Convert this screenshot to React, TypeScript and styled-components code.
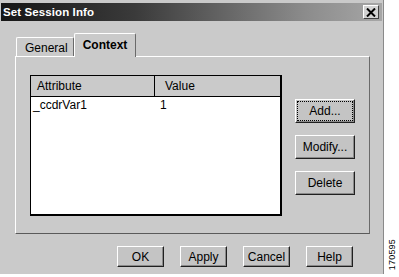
import React from "react"
import styled, { createGlobalStyle } from "styled-components"

const GlobalStyle = createGlobalStyle`
  html, body {
    margin: 0;
    padding: 0;
    background: #ffffff;
  }
  body {
    font-family: "Liberation Sans", Arial, sans-serif;
    font-size: 12px;
    color: #000;
  }
`

const face = "#cacaca"

const rows = [{ attribute: "_ccdrVar1", value: "1" }]

export default function App() {
  return (
    <>
      <GlobalStyle />
      <S.Page>
        <S.Dialog>
          <S.TitleBar>
            <S.Title>Set Session Info</S.Title>
            <S.CloseButton>
              <svg width="10" height="9" viewBox="0 0 10 9">
                <path d="M1 0.5 L9 8.5 M9 0.5 L1 8.5" stroke="#000" strokeWidth="2" />
              </svg>
            </S.CloseButton>
          </S.TitleBar>

          <S.Body>
            <S.TabStrip>
              <S.Tab>General</S.Tab>
              <S.Tab $active>Context</S.Tab>
            </S.TabStrip>
            <S.TabPanel>
              <S.Table>
                <S.HeaderRow>
                  <S.HeaderCell $divider>Attribute</S.HeaderCell>
                  <S.HeaderCell>Value</S.HeaderCell>
                </S.HeaderRow>
                {rows.map((r) => (
                  <S.Row key={r.attribute}>
                    <S.Cell>{r.attribute}</S.Cell>
                    <S.Cell $value>{r.value}</S.Cell>
                  </S.Row>
                ))}
              </S.Table>
              <S.SideButtons>
                <S.Button $w={60} $h={24} $focused>
                  <span>Add...</span>
                </S.Button>
                <S.Button $w={60} $h={24}>
                  <span>Modify...</span>
                </S.Button>
                <S.Button $w={60} $h={24}>
                  <span>Delete</span>
                </S.Button>
              </S.SideButtons>
            </S.TabPanel>

            <S.Footer>
              <S.Button $w={47} $h={21}>
                <span>OK</span>
              </S.Button>
              <S.Button $w={47} $h={21}>
                <span>Apply</span>
              </S.Button>
              <S.Button $w={47} $h={21}>
                <span>Cancel</span>
              </S.Button>
              <S.Button $w={47} $h={21}>
                <span>Help</span>
              </S.Button>
            </S.Footer>
          </S.Body>
        </S.Dialog>
        <S.Margin>
          <S.Stamp>170595</S.Stamp>
        </S.Margin>
      </S.Page>
    </>
  )
}

const S = {
  Page: styled.div`
    display: flex;
    width: 399px;
    height: 277px;
  `,
  Dialog: styled.div`
    box-sizing: border-box;
    width: 384px;
    height: 274px;
    padding: 3px 1px 0 1px;
    background: ${face};
    border-right: 1px solid #8a8a8a;
    display: flex;
    flex-direction: column;
  `,
  TitleBar: styled.div`
    height: 18px;
    display: flex;
    align-items: center;
    justify-content: space-between;
    padding: 0 3px 0 2px;
    background: linear-gradient(to right, #161616 0%, #3a3a3a 35%, #8c8c8c 80%, #a6a6a6 100%);
  `,
  Title: styled.span`
    color: #ffffff;
    font-weight: bold;
    font-size: 11.5px;
    letter-spacing: 0.1px;
  `,
  CloseButton: styled.div`
    box-sizing: border-box;
    width: 16px;
    height: 14px;
    display: flex;
    align-items: center;
    justify-content: center;
    background: #d2d2d2;
    border: 1px solid;
    border-color: #ffffff #404040 #404040 #ffffff;
  `,
  Body: styled.div`
    display: flex;
    flex-direction: column;
    padding: 12px 0 0 14px;
  `,
  TabStrip: styled.div`
    display: flex;
    align-items: flex-end;
    height: 23px;
    padding-left: 1px;
  `,
  Tab: styled.div<{ $active?: boolean }>`
    box-sizing: border-box;
    position: relative;
    height: ${({ $active }) => ($active ? "24px" : "19px")};
    margin-bottom: ${({ $active }) => ($active ? "-1px" : "0")};
    padding: ${({ $active }) => ($active ? "4px 8px 0 8px" : "3px 5px 0 8px")};
    background: ${face};
    border: 1px solid;
    border-bottom: none;
    border-color: #ffffff #6a6a6a #ffffff #ffffff;
    border-radius: 2px 2px 0 0;
    font-weight: ${({ $active }) => ($active ? "bold" : "normal")};
    font-size: 12px;
    z-index: ${({ $active }) => ($active ? 1 : 0)};
  `,
  TabPanel: styled.div`
    box-sizing: border-box;
    width: 355px;
    height: 178px;
    display: flex;
    align-items: flex-start;
    gap: 13px;
    padding: 18px 0 0 14px;
    border: 1px solid;
    border-color: #ffffff #6a6a6a #5a5a5a #ffffff;
  `,
  Table: styled.div`
    box-sizing: border-box;
    width: 252px;
    height: 141px;
    background: #ffffff;
    border: 1px solid #000;
    border-right-width: 2px;
    border-bottom-width: 2px;
  `,
  HeaderRow: styled.div`
    display: grid;
    grid-template-columns: 124px 1fr;
    height: 20px;
    background: ${face};
    border-bottom: 1px solid #000;
  `,
  HeaderCell: styled.div<{ $divider?: boolean }>`
    padding-left: ${({ $divider }) => ($divider ? "6px" : "10px")};
    line-height: 20px;
    border-right: ${({ $divider }) => ($divider ? "1px solid #000" : "none")};
  `,
  Row: styled.div`
    display: grid;
    grid-template-columns: 124px 1fr;
    height: 17px;
    line-height: 17px;
  `,
  Cell: styled.div<{ $value?: boolean }>`
    padding-left: ${({ $value }) => ($value ? "5px" : "2px")};
  `,
  SideButtons: styled.div`
    display: flex;
    flex-direction: column;
    gap: 12px;
    margin-top: 24px;
  `,
  Button: styled.div<{ $w: number; $h: number; $focused?: boolean }>`
    box-sizing: border-box;
    width: ${({ $w }) => $w}px;
    height: ${({ $h }) => $h}px;
    display: flex;
    align-items: stretch;
    padding: 2px;
    background: #c4c4c4;
    border: 1px solid;
    border-color: #ffffff #202020 #202020 #ffffff;
    box-shadow: inset -1px -1px 0 #8a8a8a;
    font-size: 12px;

    span {
      flex: 1;
      display: flex;
      align-items: center;
      justify-content: center;
      outline: ${({ $focused }) => ($focused ? "1px dotted #000" : "none")};
    }
  `,
  Footer: styled.div`
    display: flex;
    justify-content: flex-end;
    gap: 16px;
    margin-top: 12px;
    padding-right: 29px;
  `,
  Margin: styled.div`
    flex: 1;
    display: flex;
    align-items: flex-end;
    justify-content: center;
    padding-bottom: 7px;
  `,
  Stamp: styled.div`
    writing-mode: vertical-rl;
    transform: rotate(180deg);
    font-size: 9px;
    letter-spacing: 0.2px;
    color: #000;
  `,
}
